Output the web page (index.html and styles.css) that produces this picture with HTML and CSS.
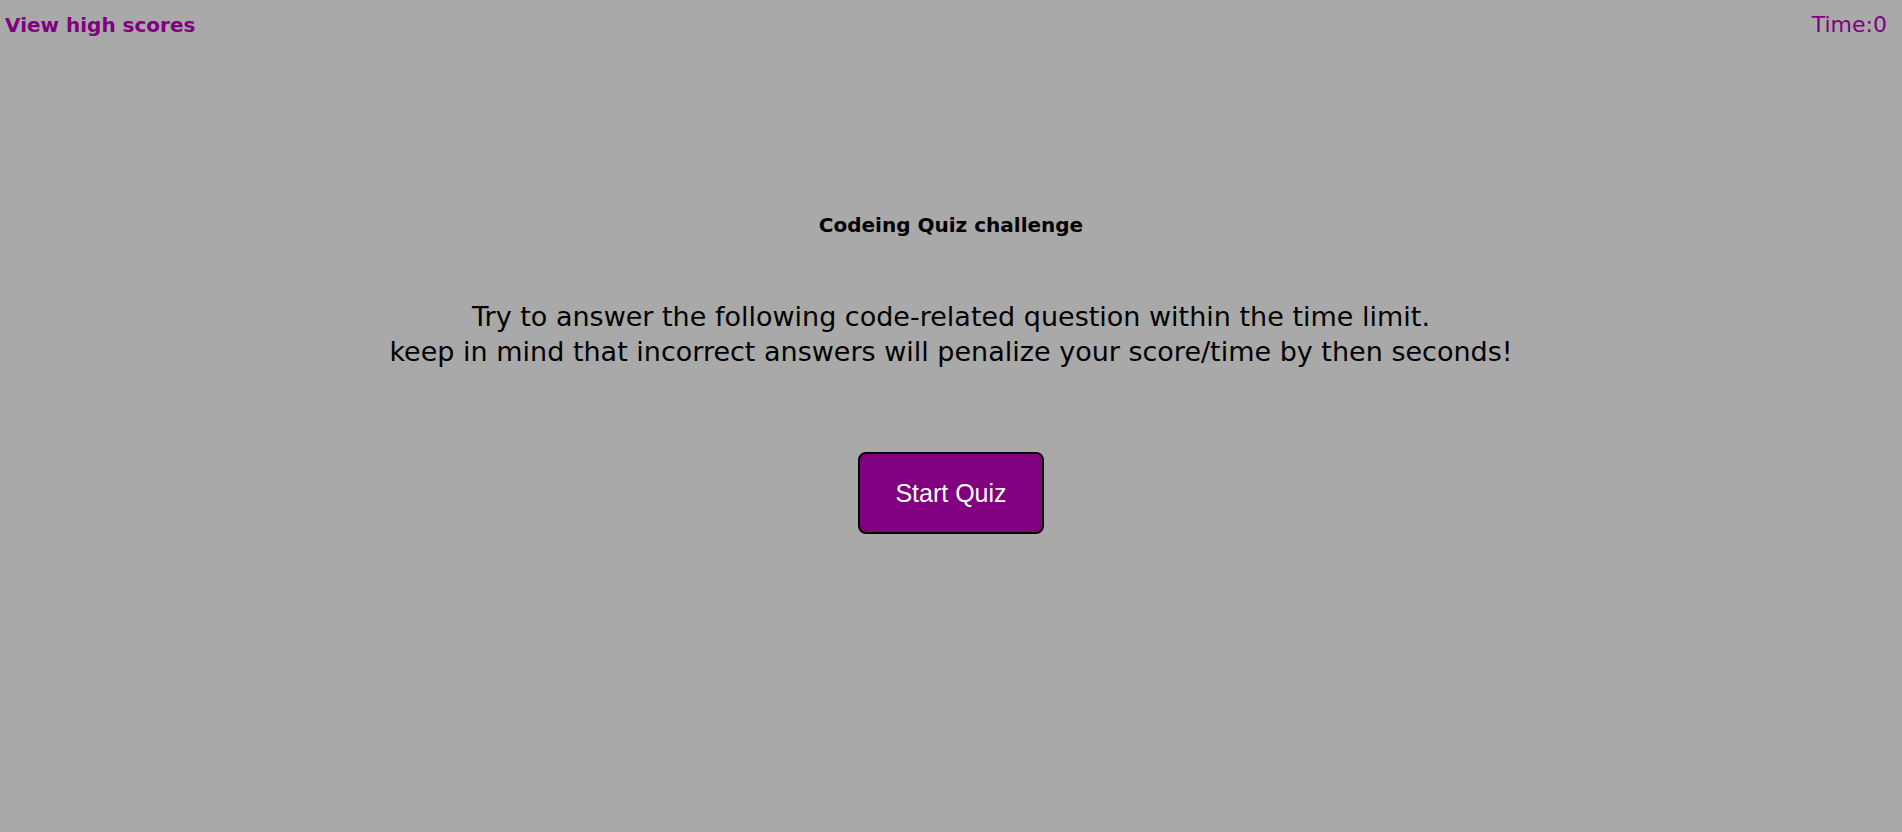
FILE: index.html
```html
<!DOCTYPE html>
<html lang="en">
<head>
<meta charset="utf-8">
<title>Code Quiz</title>
<link rel="stylesheet" href="styles.css">
</head>
<body>
<header class="topbar">
  <a class="scores-link" href="#">View high scores</a>
  <span class="timer">Time:0</span>
</header>
<main class="intro">
  <h1 class="title">Codeing Quiz challenge</h1>
  <p class="desc">Try to answer the following code-related question within the time limit.<br>keep in mind that incorrect answers will penalize your score/time by then seconds!</p>
  <button class="start-btn" type="button">Start Quiz</button>
</main>
</body>
</html>
```
FILE: styles.css
```css
html, body {
  margin: 0;
  padding: 0;
  height: 100%;
}
body {
  background: #a9a9a9;
  font-family: "DejaVu Sans", sans-serif;
  color: #000;
}
.topbar {
  display: flex;
  justify-content: space-between;
  align-items: center;
  padding: 13px 15px 0 5px;
  height: 24px;
}
.scores-link {
  color: #800080;
  font-weight: bold;
  font-size: 20px;
  line-height: 24px;
  text-decoration: none;
}
.timer {
  color: #800080;
  font-size: 22px;
  line-height: 24px;
}
.intro {
  display: flex;
  flex-direction: column;
  align-items: center;
  text-align: center;
}
.title {
  margin: 174px 0 0;
  font-size: 20px;
  line-height: 28px;
  font-weight: bold;
}
.desc {
  margin: 60px 0 0;
  font-size: 27px;
  line-height: 35px;
}
.start-btn {
  margin-top: 83px;
  width: 186px;
  height: 82px;
  background: #800080;
  color: #fff;
  border: 2px solid #000;
  border-radius: 8px;
  font-family: "Liberation Sans", Arial, sans-serif;
  font-size: 25px;
  cursor: pointer;
}
```
